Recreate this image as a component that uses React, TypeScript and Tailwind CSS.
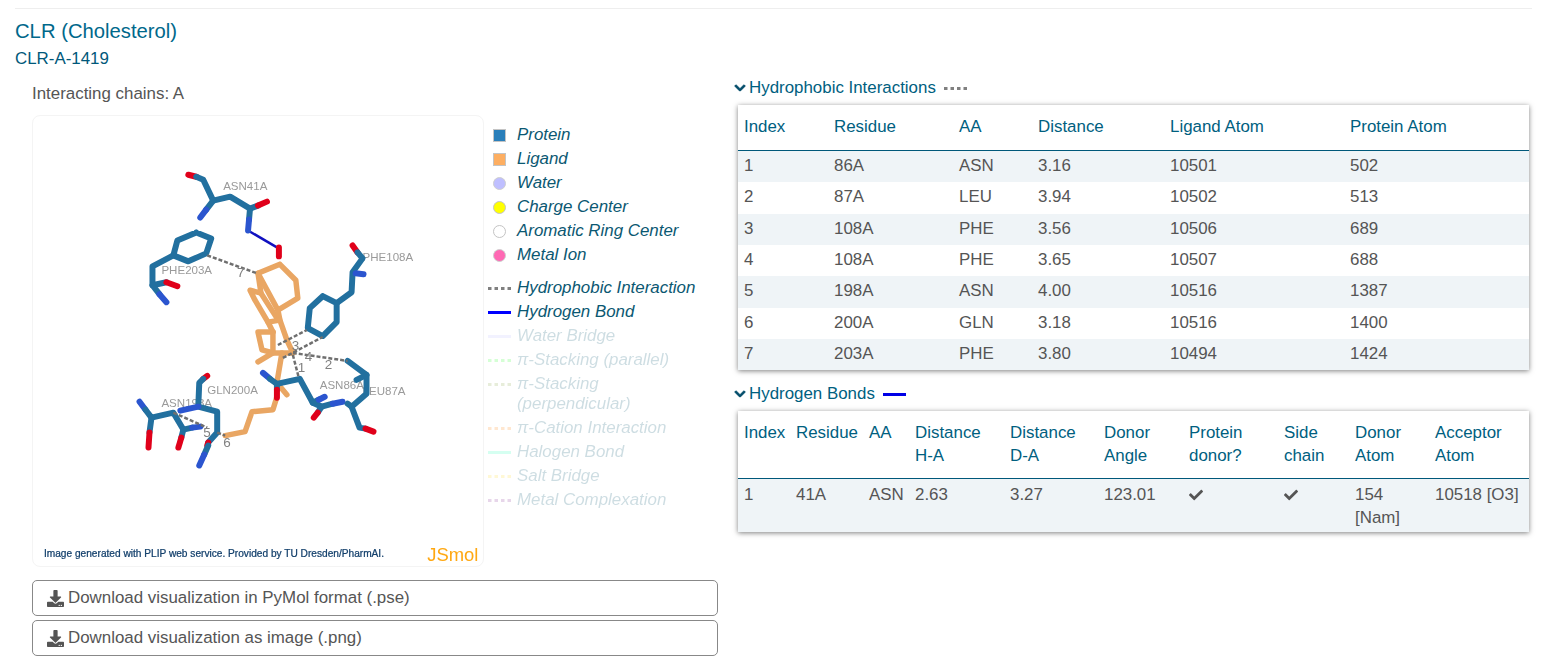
import { FaCheck, FaChevronDown, FaDownload } from "react-icons/fa";

const BLUE = "#22709f";
const NITRO = "#2b55cf";
const OXY = "#e0001a";
const LIG = "#e9a663";

const sticks: [string, string][] = [
  // ASN41A
  [OXY, "188,174 196,176"],
  [BLUE, "196,176 203,179 213,200 230,196 250,208 258,205"],
  [OXY, "258,205 267,201"],
  [BLUE, "213,200 206,209"],
  [NITRO, "206,209 200,217"],
  [BLUE, "250,208 249,219"],
  [NITRO, "249,219 248,230"],
  // PHE203A
  [BLUE, "196,232 211,238 206,253 188,261 173,255 177,240 196,232"],
  [BLUE, "173,255 152,266 152,285 166,282"],
  [OXY, "166,282 177,286"],
  [BLUE, "152,285 159,294"],
  [NITRO, "159,294 166,302"],
  // PHE108A
  [OXY, "353,245 358,252"],
  [BLUE, "358,252 363,258 353,272 352,292 337,303"],
  [NITRO, "356,273 364,274"],
  [BLUE, "323,296 337,303 337,322 323,336 308,328 310,308 323,296"],
  // ASN198A
  [NITRO, "139,402 145,410"],
  [BLUE, "145,410 151,418 173,413 183,430"],
  [BLUE, "151,418 149,433"],
  [OXY, "149,433 148,448"],
  [BLUE, "183,430 181,438"],
  [OXY, "181,438 178,448"],
  [BLUE, "183,430 192,428"],
  [NITRO, "192,428 200,427"],
  // GLN200A
  [OXY, "207,376 203,379"],
  [BLUE, "203,379 199,383 198,407 217,412 217,433 208,443"],
  [NITRO, "198,407 180,411"],
  [OXY, "208,443 207,446"],
  [BLUE, "208,446 204,455"],
  [NITRO, "204,455 199,466"],
  // ASN86A and LEU87A
  [NITRO, "263,373 270,379"],
  [BLUE, "270,379 277,384 300,379 313,403 322,407 333,404"],
  [NITRO, "333,404 343,402"],
  [BLUE, "313,403 319,400"],
  [NITRO, "319,400 325,397"],
  [BLUE, "322,407 318,413"],
  [OXY, "318,413 314,418"],
  [BLUE, "348,404 352,407 367,394 367,375 348,361"],
  [BLUE, "367,375 357,380"],
  [BLUE, "352,407 360,428 366,429"],
  [OXY, "366,429 374,432"],
  [BLUE, "277,384 277,390"],
  [OXY, "277,390 277,398"],
  [OXY, "279,247 279,256"],
];

const ligand = [
  "280,264 296,280 298,298 278,310 258,273 280,264",
  "258,273 261,293 250,290 255,300 268,322 273,332",
  "261,293 277,318",
  "278,310 280,320 287,340 293,353",
  "268,322 280,320",
  "273,332 258,332 262,350 273,353 293,353",
  "273,332 273,353 258,362",
  "282,353 277,383 277,397 273,410 252,412 245,432 225,436",
  "277,383 287,395",
];

const dashes = [
  "207,255 257,273",
  "278,345 307,330",
  "283,358 323,337",
  "293,353 348,361",
  "293,355 299,378",
  "173,413 207,428",
  "217,433 225,436",
];

const labels: [string, number, number][] = [
  ["ASN41A", 223, 189],
  ["PHE203A", 161, 274],
  ["PHE108A", 363, 261],
  ["GLN200A", 207, 394],
  ["ASN198A", 161, 407],
  ["ASN86A", 320, 389],
  ["LEU87A", 363, 395],
];

const numbers: [string, number, number][] = [
  ["7", 237, 277],
  ["3", 292, 350],
  ["4", 305, 361],
  ["2", 325, 369],
  ["1", 298, 372],
  ["5", 203, 437],
  ["6", 223, 447],
];

function Molecule() {
  return (
    <svg viewBox="32 115 452 452" className="block w-[450px] h-[450px]">
      <g className="blur-[0.4px]">
        {labels.map(([t, x, y]) => (
          <text key={t} x={x} y={y} fontSize="11.6" fill="#9a9a9a">
            {t}
          </text>
        ))}
        <polyline points="248,230 277,247" fill="none" stroke="#1010c0" strokeWidth="2.5" />
        {ligand.map((p, i) => (
          <polyline key={i} points={p} fill="none" stroke={LIG} strokeWidth="5.5" strokeLinecap="round" strokeLinejoin="round" />
        ))}
        {sticks.map(([c, p], i) => (
          <polyline key={i} points={p} fill="none" stroke={c} strokeWidth="6" strokeLinecap="round" strokeLinejoin="round" />
        ))}
        {dashes.map((p, i) => (
          <polyline key={i} points={p} fill="none" stroke="#6f6f6f" strokeWidth="2.5" strokeDasharray="4 2" />
        ))}
        {numbers.map(([t, x, y]) => (
          <text key={t} x={x} y={y} fontSize="13.5" fill="#808080">
            {t}
          </text>
        ))}
        <text x="43" y="558" fontSize="10.2" fill="#123f6b" stroke="#123f6b" strokeWidth="0.25">
          Image generated with PLIP web service. Provided by TU Dresden/PharmAI.
        </text>
        <text x="428" y="562" fontSize="18.5" fill="#ffa812">
          JSmol
        </text>
      </g>
    </svg>
  );
}

function Line({ color, dotted, h = 3 }: { color: string; dotted?: boolean; h?: number }) {
  return (
    <svg width="23" height={h} className="block">
      <line x1="0" y1={h / 2} x2="23" y2={h / 2} stroke={color} strokeWidth={h} strokeDasharray={dotted ? "3.5 3" : undefined} />
    </svg>
  );
}

const atoms = [
  { label: "Protein", cls: "bg-[#2a7fba] border border-[#c4c4c4]" },
  { label: "Ligand", cls: "bg-[#fdae61] border border-[#c4c4c4]" },
  { label: "Water", cls: "bg-[#bfbfff] border border-[#cfcfcf] rounded-full" },
  { label: "Charge Center", cls: "bg-[#ffff00] border border-[#c4c4c4] rounded-full" },
  { label: "Aromatic Ring Center", cls: "bg-white border border-[#c4c4c4] rounded-full" },
  { label: "Metal Ion", cls: "bg-[#ff69b4] border border-[#cfcfcf] rounded-full" },
];

const bonds = [
  { label: "Hydrophobic Interaction", color: "#808080", dotted: true },
  { label: "Hydrogen Bond", color: "#0000ff" },
  { label: "Water Bridge", color: "#bfbfff", faded: true },
  { label: "π-Stacking (parallel)", color: "#33ff33", dotted: true, faded: true },
  { label: "π-Stacking (perpendicular)", color: "#8aa84a", dotted: true, faded: true },
  { label: "π-Cation Interaction", color: "#ff8c1a", dotted: true, faded: true },
  { label: "Halogen Bond", color: "#33ffbb", faded: true },
  { label: "Salt Bridge", color: "#ffdd33", dotted: true, faded: true },
  { label: "Metal Complexation", color: "#8b3a9c", dotted: true, faded: true },
];

function Legend() {
  return (
    <div className="mt-[10px] italic text-[#0b5872] leading-5">
      {atoms.map((a) => (
        <div key={a.label} className="flex items-center pb-1">
          <div className="w-[33px] flex justify-center pr-[2px]">
            <div className={`w-[13px] h-[13px] ${a.cls}`} />
          </div>
          <span>{a.label}</span>
        </div>
      ))}
      <div className="h-[9px]" />
      {bonds.map((b) => (
        <div key={b.label} className={`flex pb-1 ${b.faded ? "opacity-20" : ""}`}>
          <div className="w-[33px] h-5 pl-1 flex items-center">
            <Line color={b.color} dotted={b.dotted} />
          </div>
          <span className="w-[180px]">{b.label}</span>
        </div>
      ))}
    </div>
  );
}

function DownloadButton({ label }: { label: string }) {
  return (
    <button className="flex items-center gap-1 w-[686px] h-9 mb-1 pl-[14px] border border-[#888] rounded-[5px] text-[#555] bg-white">
      <FaDownload className="w-[17px] h-[17px]" />
      <span>{label}</span>
    </button>
  );
}

const hydrophobic = [
  ["1", "86A", "ASN", "3.16", "10501", "502"],
  ["2", "87A", "LEU", "3.94", "10502", "513"],
  ["3", "108A", "PHE", "3.56", "10506", "689"],
  ["4", "108A", "PHE", "3.65", "10507", "688"],
  ["5", "198A", "ASN", "4.00", "10516", "1387"],
  ["6", "200A", "GLN", "3.18", "10516", "1400"],
  ["7", "203A", "PHE", "3.80", "10494", "1424"],
];

const hydroCols = [
  { name: "Index", w: "w-[90px]" },
  { name: "Residue", w: "w-[125px]" },
  { name: "AA", w: "w-[79px]" },
  { name: "Distance", w: "w-[132px]" },
  { name: "Ligand Atom", w: "w-[180px]" },
  { name: "Protein Atom", w: "w-[185px]" },
];

const hbondCols = [
  { name: "Index", w: "w-[52px]" },
  { name: "Residue", w: "w-[73px]" },
  { name: "AA", w: "w-[46px]" },
  { name: "Distance H-A", w: "w-[95px]" },
  { name: "Distance D-A", w: "w-[94px]" },
  { name: "Donor Angle", w: "w-[85px]" },
  { name: "Protein donor?", w: "w-[95px]" },
  { name: "Side chain", w: "w-[71px]" },
  { name: "Donor Atom", w: "w-[80px]" },
  { name: "Acceptor Atom", w: "w-[100px]" },
];

const hbondRow = ["1", "41A", "ASN", "2.63", "3.27", "123.01", "check", "check", "154 [Nam]", "10518 [O3]"];

function Head({ cols, pb }: { cols: { name: string; w: string }[]; pb: string }) {
  return (
    <thead>
      <tr className="border-b border-[#00587a]">
        {cols.map((c) => (
          <th key={c.name} className={`${c.w} ${pb} pl-1.5 pr-2.5 pt-[10.5px] text-left font-normal text-[#00607f] align-top`}>
            {c.name}
          </th>
        ))}
      </tr>
    </thead>
  );
}

function SectionTitle({ title, children }: { title: string; children: React.ReactNode }) {
  return (
    <div className="flex items-center h-6 mt-px mb-[5px] text-[#00607f] -ml-[4px]">
      <FaChevronDown className="w-3 h-3 mr-[3px] text-[#034d6b]" stroke="currentColor" strokeWidth={40} />
      <span className="mr-2">{title}</span>
      {children}
    </div>
  );
}

export default function App() {
  return (
    <div className="font-['Liberation_Sans',Arial,sans-serif] text-[16.9px] leading-[22.86px] text-[#555] pl-[15px] pr-[25px] pt-2 pb-[10px] bg-white">
      <hr className="border-[#eee]" />
      <h3 className="text-[20.25px] leading-7 mt-2 text-[#00688b]">CLR (Cholesterol)</h3>
      <h4 className="text-[16.9px] leading-6 mt-[2px] text-[#00587a]">CLR-A-1419</h4>

      <div className="flex mt-[4px]">
        <div className="w-[722px] shrink-0 pl-[17px] pt-[7px]">
          <p className="leading-6 mb-[9px]">Interacting chains: A</p>
          <div className="flex">
            <div className="w-[452px] h-[452px] shrink-0 border border-[#f4f4f4] rounded-lg">
              <Molecule />
            </div>
            <Legend />
          </div>
          <div className="mt-[13px]">
            <DownloadButton label="Download visualization in PyMol format (.pse)" />
            <DownloadButton label="Download visualization as image (.png)" />
          </div>
        </div>

        <div className="flex-1 pl-px pr-[3px]">
          <SectionTitle title="Hydrophobic Interactions">
            <Line color="#808080" dotted />
          </SectionTitle>
          <div className="shadow-[0_1px_5px_rgba(0,0,0,0.5)] mb-3">
            <table className="w-full table-fixed">
              <Head cols={hydroCols} pb="pb-[11.5px]" />
              <tbody>
                {hydrophobic.map((row, i) => (
                  <tr key={i} className={i % 2 === 0 ? "bg-[#eff4f7]" : "bg-white"}>
                    <td className="pl-1.5 py-[4.24px]">{row[0]}</td>
                    <td className="pl-1.5 py-[4.24px]">{row[1]}</td>
                    <td className="pl-1.5 py-[4.24px]">{row[2]}</td>
                    <td className="pl-1.5 py-[4.24px]">{row[3]}</td>
                    <td className="pl-1.5 py-[4.24px]">{row[4]}</td>
                    <td className="pl-1.5 py-[4.24px]">{row[5]}</td>
                  </tr>
                ))}
              </tbody>
            </table>
          </div>

          <SectionTitle title="Hydrogen Bonds">
            <Line color="#0000e6" />
          </SectionTitle>
          <div className="shadow-[0_1px_5px_rgba(0,0,0,0.5)]">
            <table className="w-full table-fixed">
              <Head cols={hbondCols} pb="pb-[10.5px]" />
              <tbody>
                <tr className="bg-[#eff4f7] align-top">
                  {hbondRow.map((v, i) => (
                    <td key={i} className="pl-1.5 pr-1 pt-[5.5px] pb-[1.5px]">
                      {v === "check" ? <FaCheck className="w-[14px] h-[14px] mt-1 text-[#555]" /> : v}
                    </td>
                  ))}
                </tr>
              </tbody>
            </table>
          </div>
        </div>
      </div>
    </div>
  );
}
